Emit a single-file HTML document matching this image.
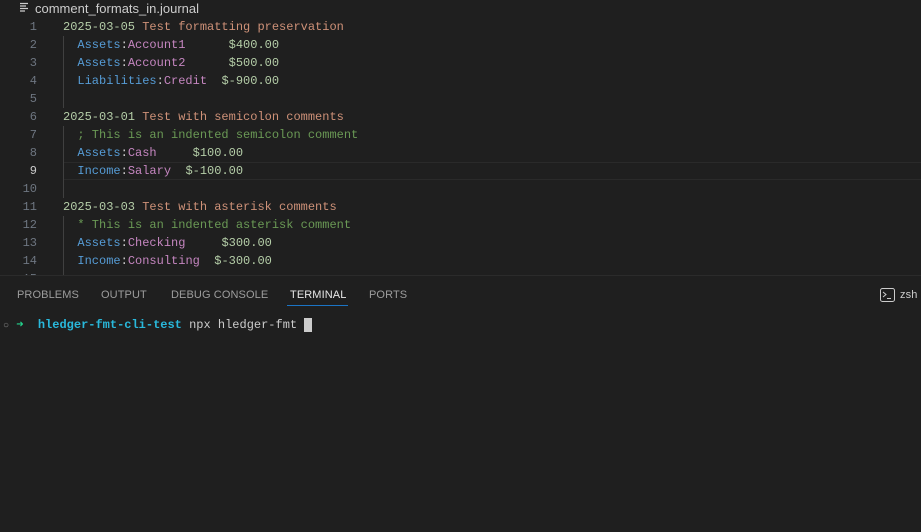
<!DOCTYPE html>
<html><head><meta charset="utf-8"><style>
*{margin:0;padding:0;box-sizing:border-box}
body{width:921px;height:532px;background:#1f1f1f;overflow:hidden;font-family:"Liberation Sans",sans-serif;position:relative}
.title{position:absolute;left:20px;top:0;height:15px;font-size:13px;color:#cccccc;line-height:15px}
.title span.ic{display:inline-block;width:9px;margin-right:6px;vertical-align:1px}
.ed{position:absolute;left:0;top:18px;width:921px;height:257px;overflow:hidden}
.l{position:absolute;left:0;height:18px;width:921px;font-family:"Liberation Mono",monospace;font-size:12px;line-height:18px;white-space:pre}
.n{position:absolute;left:0;width:37px;text-align:right;color:#6e7681}
.c{position:absolute;left:63px}
.curbox{position:absolute;left:63px;top:144px;width:858px;height:18px;border-top:1px solid #2a2a2a;border-bottom:1px solid #2a2a2a}
.d{color:#b5cea8}.t{color:#ce9178}.a{color:#569cd6}.s{color:#c586c0}.m{color:#b5cea8}.k{color:#6a9955}.w{color:#d4d4d4}
.guide{position:absolute;left:63px;width:1px;background:#404040}
.panel{position:absolute;left:0;top:275px;width:921px;height:257px;border-top:1px solid #2b2b2b;background:#1f1f1f}
.tab{position:absolute;top:13px;font-size:11px;color:#9d9d9d;letter-spacing:0.1px}
.tab.act{color:#e7e7e7}
.ul{position:absolute;left:287px;top:29px;width:61px;height:1px;background:#1b74c5}
.term{position:absolute;top:41px;left:0;font-family:"Liberation Mono",monospace;font-size:12px;line-height:16px;white-space:pre;color:#cccccc}
</style></head><body>
<div class="title"><span class="ic"><svg width="9" height="10" viewBox="0 0 9 10"><path d="M0 1.5h8M0 4h6M0 6.5h8M0 9h5" stroke="#ccc" stroke-width="1.2"/></svg></span>comment_formats_in.journal</div>
<div class="ed">
<div class="curbox"></div>
<div class="guide" style="top:18px;height:72px"></div>
<div class="guide" style="top:108px;height:72px"></div>
<div class="guide" style="top:198px;height:60px"></div>
<div class="l" style="top:0"><span class="n">1</span><span class="c"><span class="d">2025-03-05</span> <span class="t">Test formatting preservation</span></span></div>
<div class="l" style="top:18px"><span class="n">2</span><span class="c">  <span class="a">Assets</span><span class="w">:</span><span class="s">Account1</span>      <span class="m">$400.00</span></span></div>
<div class="l" style="top:36px"><span class="n">3</span><span class="c">  <span class="a">Assets</span><span class="w">:</span><span class="s">Account2</span>      <span class="m">$500.00</span></span></div>
<div class="l" style="top:54px"><span class="n">4</span><span class="c">  <span class="a">Liabilities</span><span class="w">:</span><span class="s">Credit</span>  <span class="m">$-900.00</span></span></div>
<div class="l" style="top:72px"><span class="n">5</span></div>
<div class="l" style="top:90px"><span class="n">6</span><span class="c"><span class="d">2025-03-01</span> <span class="t">Test with semicolon comments</span></span></div>
<div class="l" style="top:108px"><span class="n">7</span><span class="c">  <span class="k">; This is an indented semicolon comment</span></span></div>
<div class="l" style="top:126px"><span class="n">8</span><span class="c">  <span class="a">Assets</span><span class="w">:</span><span class="s">Cash</span>     <span class="m">$100.00</span></span></div>
<div class="l" style="top:144px"><span class="n" style="color:#cccccc">9</span><span class="c">  <span class="a">Income</span><span class="w">:</span><span class="s">Salary</span>  <span class="m">$-100.00</span></span></div>
<div class="l" style="top:162px"><span class="n">10</span></div>
<div class="l" style="top:180px"><span class="n">11</span><span class="c"><span class="d">2025-03-03</span> <span class="t">Test with asterisk comments</span></span></div>
<div class="l" style="top:198px"><span class="n">12</span><span class="c">  <span class="k">* This is an indented asterisk comment</span></span></div>
<div class="l" style="top:216px"><span class="n">13</span><span class="c">  <span class="a">Assets</span><span class="w">:</span><span class="s">Checking</span>     <span class="m">$300.00</span></span></div>
<div class="l" style="top:234px"><span class="n">14</span><span class="c">  <span class="a">Income</span><span class="w">:</span><span class="s">Consulting</span>  <span class="m">$-300.00</span></span></div>
<div class="l" style="top:252px"><span class="n">15</span></div>
</div>
<div class="panel">
<span class="tab" style="left:17px">PROBLEMS</span>
<span class="tab" style="left:101px">OUTPUT</span>
<span class="tab" style="left:171px">DEBUG CONSOLE</span>
<span class="tab act" style="left:290px">TERMINAL</span>
<span class="tab" style="left:369px">PORTS</span>
<div class="ul"></div>
<svg style="position:absolute;left:880px;top:12px" width="15" height="14" viewBox="0 0 15 14"><rect x="0.5" y="0.5" width="14" height="13" rx="2" fill="none" stroke="#ccc"/><path d="M3 4l3 2.5L3 9M7 10.5h4" stroke="#ccc" fill="none"/></svg>
<span class="tab act" style="left:900px;color:#ccc">zsh</span>
<div class="term" style="left:3px"><span style="color:#888;font-size:10px">○</span> <span style="color:#23d18b">➜</span>  <span style="color:#29b8db;font-weight:bold">hledger-fmt-cli-test</span> npx hledger-fmt <span style="background:#cccccc"> </span></div>
</div>
</body></html>
